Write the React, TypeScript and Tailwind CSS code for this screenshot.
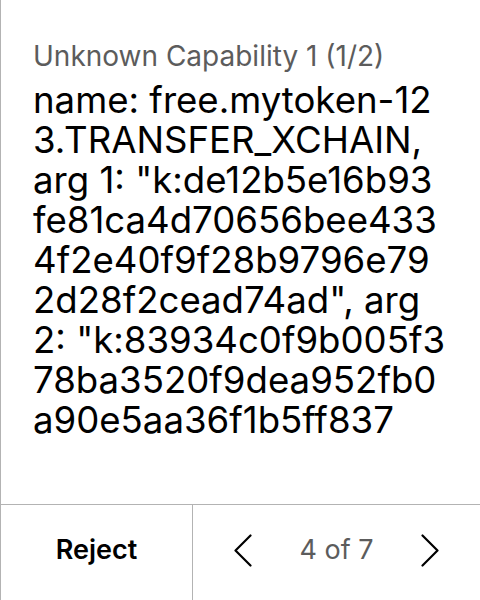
const capability = {
	title: "Unknown Capability 1 (1/2)",
	// wrapped the way the device breaks it
	lines: [
		"name: free.mytoken-12",
		"3.TRANSFER_XCHAIN,",
		"arg 1: \"k:de12b5e16b93",
		"fe81ca4d70656bee433",
		"4f2e40f9f28b9796e79",
		"2d28f2cead74ad\", arg",
		"2: \"k:83934c0f9b005f3",
		"78ba3520f9dea952fb0",
		"a90e5aa36f1b5ff837",
	],
};

function Chevron({dir}: {dir: "left" | "right"}) {
	return (
		<svg width="18" height="33" viewBox="0 0 18 33" fill="none" stroke="currentColor" strokeWidth={2.2} strokeLinecap="round" strokeLinejoin="round">
			{dir === "left"
				? <path d="M16.5 1.5 1.5 16.5l15 15"/>
				: <path d="M1.5 1.5l15 15-15 15"/>}
		</svg>
	);
}

export default function App() {
	return (
		<div className="w-[480px] h-[600px] flex flex-col bg-white border-l border-[#b3b3b3] font-['Inter',sans-serif] text-black overflow-hidden">

			{/* Content */}
			<div className="flex-1 pl-8 pr-[30px] pt-[40px] overflow-hidden">
				<p className="text-[28px] leading-[32px] text-[#5c5c5c]">{capability.title}</p>
				<p className="text-[36.6px] leading-[40px] whitespace-nowrap mt-[8px]">
					{capability.lines.map((line, i) => (
						<span key={i} className="block">{line}</span>
					))}
				</p>
			</div>

			{/* Footer */}
			<div className="h-[96px] flex border-t border-[#b3b3b3]">
				<button className="w-[192px] flex items-center justify-center pb-[4px] text-[27px] font-semibold border-r border-[#b3b3b3]">
					Reject
				</button>
				<div className="flex-1 flex items-center justify-between px-[41px] pb-[4px]">
					<Chevron dir="left"/>
					<span className="text-[27px] text-[#5c5c5c]">4 of 7</span>
					<Chevron dir="right"/>
				</div>
			</div>
		</div>
	);
}
